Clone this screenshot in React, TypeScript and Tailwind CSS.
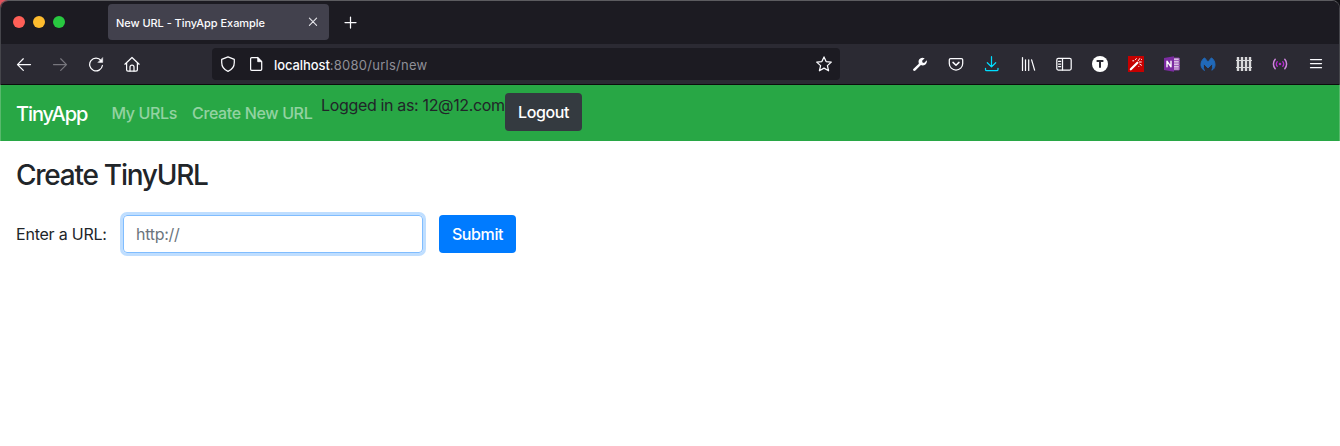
import type { ReactNode } from "react";

function Icon({ children, className = "" }: { children: ReactNode; className?: string }) {
  return (
    <svg
      viewBox="0 0 16 16"
      className={`size-4 shrink-0 ${className}`}
      fill="none"
      stroke="currentColor"
      strokeWidth="1.25"
      strokeLinecap="round"
      strokeLinejoin="round"
    >
      {children}
    </svg>
  );
}

function ToolButton({ label, children, className = "" }: { label: string; children: ReactNode; className?: string }) {
  return (
    <button aria-label={label} className={`flex h-8 w-9 shrink-0 items-center justify-center ${className}`}>
      <Icon>{children}</Icon>
    </button>
  );
}

function TabStrip() {
  return (
    <div className="flex h-[43px] items-start bg-[#1c1b22]">
      <div className="flex w-[107px] gap-2 pt-[15px] pl-3">
        <span className="size-3 rounded-full bg-[#ff5f57]" />
        <span className="size-3 rounded-full bg-[#febc2e]" />
        <span className="size-3 rounded-full bg-[#28c840]" />
      </div>
      <div className="mt-[3px] flex h-9 w-[221px] items-center justify-between rounded bg-[#42414d] pr-2 pl-2">
        <span className="pt-0.5 text-[11px] leading-4 font-medium tracking-[-0.05px] whitespace-nowrap text-[#fbfbfe]">
          New URL - TinyApp Example
        </span>
        <Icon className="text-[#e6e6eb]">
          <path d="M4.4 4.2l7.2 7.2M11.6 4.2l-7.2 7.2" strokeWidth="1.1" />
        </Icon>
      </div>
      <button aria-label="New tab" className="mt-[13px] ml-[13px] text-[#fbfbfe]">
        <Icon>
          <path d="M8.5 3v11M3 8.5h11" />
        </Icon>
      </button>
    </div>
  );
}

function Toolbar() {
  return (
    <div className="flex h-[41px] items-start border-b border-[#0c0c0d] bg-[#2b2a33] pt-1 text-[#fbfbfe]">
      <div className="flex w-[211px] pl-[5px]">
        <ToolButton label="Back">
          <path d="M14.5 8.6H1.5M7.3 2.8L1.5 8.6l5.8 5.8" />
        </ToolButton>
        <ToolButton label="Forward" className="text-[#77767d]">
          <path d="M1.5 8.6h13M8.7 2.8l5.8 5.8-5.8 5.8" />
        </ToolButton>
        <ToolButton label="Reload">
          <path d="M13.1 4.6a6.4 6.4 0 1 0 1.3 4.9" />
          <path d="M14.7 1.9v4.5h-4.5z" fill="currentColor" strokeWidth=".5" />
        </ToolButton>
        <ToolButton label="Home">
          <path d="M.9 8.2L8 1.5l7.1 6.7M2.6 6.8v7c0 .9.5 1.4 1.4 1.4h8c.9 0 1.4-.5 1.4-1.4v-7" />
          <path d="M6 15v-4a2 2 0 0 1 4 0v4" />
        </ToolButton>
      </div>
      <div className="flex h-8 w-[628px] items-center rounded bg-[#1c1b22] pr-2 pl-2">
        <Icon>
          <path d="M8 .9l6.3 2.5v3.1c0 4-2.8 7.4-6.3 8.8-3.5-1.4-6.3-4.8-6.3-8.8V3.4z" />
        </Icon>
        <Icon className="ml-3">
          <path d="M3.7 1.7h6.1l3.9 3.9v7.7c0 .7-.4 1.1-1.1 1.1H3.7c-.7 0-1.1-.4-1.1-1.1V2.8c0-.7.4-1.1 1.1-1.1z" />
          <path d="M9.7 1.8v3.9h3.9z" fill="currentColor" strokeWidth=".8" />
        </Icon>
        <span className="ml-2.5 pt-0.5 text-[13px] leading-5 tracking-[0.26px] whitespace-nowrap text-[#8f8f97]">
          <span className="font-medium tracking-[-0.08px] text-[#fbfbfe]">localhost</span>:8080/urls/new
        </span>
        <Icon className="ml-auto">
          <path d="M8 .9l2.1 4.7 5.2.5-3.9 3.5 1.2 5.2L8 12.1l-4.6 2.7 1.2-5.2L.7 6.1l5.2-.5z" />
        </Icon>
      </div>
      <div className="ml-[62px] flex">
        <ToolButton label="Developer tools">
          <path
            d="M1.3 13.1l5.5-5.4a4.1 4.1 0 0 1 4.7-5.8l1.2.4-2.6 2.5.4 1.6 1.6.5 2.7-2.6c.7 2.5-1.5 5.3-4.1 5.1-.7 0-1.1-.1-1.8-.3l-5.5 5.4c-1.2 1.1-3.1-.3-2.1-1.4z"
            fill="currentColor"
            stroke="none"
          />
        </ToolButton>
        <ToolButton label="Pocket">
          <path d="M2.6 2.5h10.8c.8 0 1.3.5 1.3 1.3v3.6a6.7 6.7 0 0 1-13.4 0V3.8c0-.8.5-1.3 1.3-1.3z" />
          <path d="M5 6.4l3 2.9 3-2.9" strokeWidth="1.5" />
        </ToolButton>
        <ToolButton label="Downloads" className="text-[#00ddff]">
          <path d="M7.5 .7v10M3.3 6.7l4.2 4.2 4.2-4.2M1.5 12.3v1.1c0 .8.5 1.3 1.3 1.3h9.9c.8 0 1.3-.5 1.3-1.3v-1.1" />
        </ToolButton>
        <ToolButton label="Library">
          <path d="M2.5 1.6v12.8M5.5 3.8v10.6M8.7 3.8v10.6M11.6 3.8l3 10.4" />
        </ToolButton>
        <ToolButton label="Sidebars">
          <rect x=".8" y="2.4" width="14.4" height="11.7" rx="1.5" />
          <path d="M6.5 2.5v11.4M2.6 5.4h2M2.6 8h2M2.6 10.6h2" />
        </ToolButton>
        <ToolButton label="Account T">
          <circle cx="8" cy="8" r="8" fill="#fff" stroke="none" />
          <path d="M4.6 5h6.8M8 5v6.8" stroke="#2b2a33" strokeWidth="2" strokeLinecap="butt" />
        </ToolButton>
        <ToolButton label="Magic wand">
          <path d="M0 0h16v16H0z" fill="#c60000" stroke="none" />
          <path d="M2.8 13.3l6.6-6.6" stroke="#fff" strokeWidth="2.2" />
          <path
            d="M7.5 3.6l.8-1M10.3 4.6l1.4-2M11.3 6h2M11.8 8.2l1.7 1M4.8 4.8h1M13.4 3.4h.1M10.8 10.3v.1"
            stroke="#fff"
            strokeWidth="1"
          />
        </ToolButton>
        <ToolButton label="OneNote">
          <path d="M9 2h6.2v12H9z" fill="#d9bfe4" stroke="#9148af" strokeWidth=".9" />
          <path d="M10 4.5h5.5M10 7h5.5M10 9.5h5.5M10 12h5.5" stroke="#9c55b7" strokeWidth=".9" />
          <path d="M0 2l10-1.8v15.6L0 14z" fill="#7b2ca1" stroke="none" />
          <path d="M3 10.8V5.2l4 5.6V5.2" stroke="#fff" strokeWidth="1.4" />
        </ToolButton>
        <ToolButton label="Malwarebytes">
          <path
            d="M4.2 14.2C.8 12.8.1 8.1 2 4.6 2.7 3.2 3.6 2.2 4.7 1.9L8 6l3.3-4.1c1.1.3 2 1.3 2.7 2.7 1.9 3.5 1.2 8.2-2.2 9.6.9-1.8 1-3.7.3-6.3L8 12 3.9 7.9c-.7 2.6-.6 4.5.3 6.3z"
            fill="#2169b8"
            stroke="#2169b8"
            strokeWidth=".9"
          />
        </ToolButton>
        <ToolButton label="Containers" className="text-[#d8d8da]">
          <path d="M2 1v14M6 1v14M10 1v14M14 1v14" strokeWidth="2.4" strokeLinecap="butt" />
          <path d="M0 4.5h16M0 11.5h16" strokeWidth="1.2" strokeLinecap="butt" />
        </ToolButton>
        <ToolButton label="Broadcast" className="text-[#b52bd0]">
          <path d="M3.2 3.3a7.1 7.1 0 0 0 0 9.4M12.8 3.3a7.1 7.1 0 0 1 0 9.4" stroke="#ce86dd" strokeWidth="1.5" />
          <path d="M5.2 5.6a3.9 3.9 0 0 0 0 4.8M10.8 5.6a3.9 3.9 0 0 1 0 4.8" />
          <circle cx="8" cy="8" r="1.3" fill="currentColor" stroke="none" />
        </ToolButton>
        <ToolButton label="Menu">
          <path d="M2.5 3.5h11M2.5 7.6h11M2.5 11.7h11" />
        </ToolButton>
      </div>
    </div>
  );
}

export default function App() {
  return (
    <div className="h-[446px] w-[1340px] overflow-hidden bg-white font-['Inter',sans-serif] text-base text-[#212529]">
      <div className="bg-linear-to-r from-[#e0525c] from-50% to-[#101014] to-50%">
        <div className="overflow-hidden rounded-tl-lg rounded-tr-lg border-x border-t border-x-[#45454b] border-t-[#5c5c60]">
          <TabStrip />
          <Toolbar />
        </div>
      </div>
      <nav className="flex h-14 items-center border-x border-[#58b96c] bg-[#28a745] pl-[15px] whitespace-nowrap">
        <a className="w-[95.5px] pt-0.5 text-xl leading-[30px] font-medium tracking-[-1.1px] text-white">TinyApp</a>
        <a className="w-[80.5px] font-medium tracking-[-0.38px] text-white/50">My URLs</a>
        <a className="w-[129px] font-medium tracking-[-0.35px] text-white/50">Create New URL</a>
        <div className="flex h-full items-start pt-2">
          <span className="w-[184px] tracking-[-0.34px]">Logged in as: 12@12.com</span>
          <button className="h-[38px] w-[77px] rounded bg-[#343a40] font-[550] tracking-[-0.4px] text-white">
            Logout
          </button>
        </div>
      </nav>
      <main className="px-4 pt-4">
        <h3 className="pt-px pb-px text-[28px] leading-[34px] font-[550] tracking-[-1.25px]">Create TinyURL</h3>
        <form className="mt-[22px] flex items-center">
          <label className="w-[107px] tracking-[-0.22px] whitespace-nowrap">Enter a URL:</label>
          <input
            type="text"
            placeholder="http://"
            className="h-[38px] w-[300px] rounded border border-[#80bdff] px-3 tracking-[-0.3px] shadow-[0_0_0_3px_#bfdeff] outline-none placeholder:text-[#6c757d]"
          />
          <button
            type="button"
            className="ml-4 h-[38px] w-[77px] rounded bg-[#007bff] font-[550] tracking-[-0.4px] text-white"
          >
            Submit
          </button>
        </form>
      </main>
    </div>
  );
}
